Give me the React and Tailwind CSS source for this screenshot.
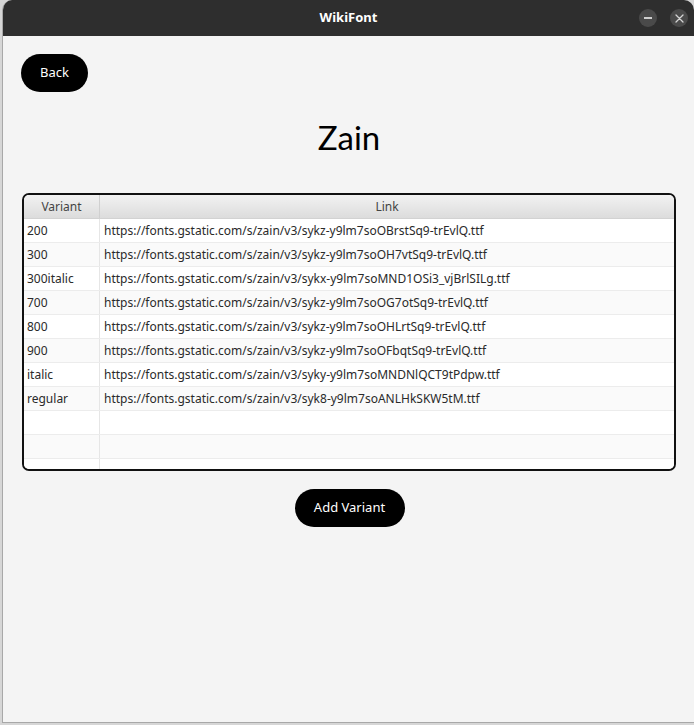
import React from "react";

const rows = [
  ["200", "https://fonts.gstatic.com/s/zain/v3/sykz-y9lm7soOBrstSq9-trEvlQ.ttf"],
  ["300", "https://fonts.gstatic.com/s/zain/v3/sykz-y9lm7soOH7vtSq9-trEvlQ.ttf"],
  ["300italic", "https://fonts.gstatic.com/s/zain/v3/sykx-y9lm7soMND1OSi3_vjBrlSILg.ttf"],
  ["700", "https://fonts.gstatic.com/s/zain/v3/sykz-y9lm7soOG7otSq9-trEvlQ.ttf"],
  ["800", "https://fonts.gstatic.com/s/zain/v3/sykz-y9lm7soOHLrtSq9-trEvlQ.ttf"],
  ["900", "https://fonts.gstatic.com/s/zain/v3/sykz-y9lm7soOFbqtSq9-trEvlQ.ttf"],
  ["italic", "https://fonts.gstatic.com/s/zain/v3/syky-y9lm7soMNDNlQCT9tPdpw.ttf"],
  ["regular", "https://fonts.gstatic.com/s/zain/v3/syk8-y9lm7soANLHkSKW5tM.ttf"],
  ["", ""],
  ["", ""],
  ["", ""],
];

export default function App() {
  return (
    <div
      className="w-[694px] h-[725px] bg-[#d6d6d6] overflow-hidden"
      style={{ fontFamily: '"Noto Sans", "DejaVu Sans", sans-serif' }}
    >
      <div className="ml-[2px] h-[723px] flex flex-col bg-[#f4f4f4] rounded-t-[10px] overflow-hidden border-l border-b border-[#a8a8a8]">
        <div className="h-[36px] shrink-0 bg-[#2e2e2e] flex items-center relative">
          <div className="flex-1 text-center text-white text-[13px] font-bold">WikiFont</div>
          <div className="absolute right-[6px] top-[9px] flex gap-[13px]">
            <div className="w-[18px] h-[18px] rounded-full bg-[#4a4a4a] flex items-center justify-center">
              <div className="w-[8px] h-[1.5px] bg-[#cfcfcf]" />
            </div>
            <div className="w-[18px] h-[18px] rounded-full bg-[#4a4a4a] flex items-center justify-center">
              <svg width="9" height="9" viewBox="0 0 9 9">
                <path d="M1 1L8 8M8 1L1 8" stroke="#d4d4d4" strokeWidth="1.3" strokeLinecap="round" />
              </svg>
            </div>
          </div>
        </div>

        <div className="flex-1 flex flex-col pl-[19px] pr-[18px]">
          <div className="pt-[18px] -ml-[1px]">
            <button className="w-[67px] h-[38px] rounded-full bg-black text-white text-[13px]">Back</button>
          </div>
          <div
            className="text-center text-[33px] leading-none text-black mt-[29px]"
            style={{ fontFamily: '"Lato", "Noto Sans", sans-serif' }}
          >
            Zain
          </div>
          <div className="mt-[39px] h-[278px] border-2 border-[#111] rounded-[7px] overflow-hidden bg-white">
            <div className="flex h-[24px] bg-gradient-to-b from-[#f2f2f2] to-[#dcdcdc] border-b border-[#d2d2d2] text-[12px] text-[#444]">
              <div className="w-[76px] flex items-center justify-center border-r border-[#d0d0d0]">Variant</div>
              <div className="flex-1 flex items-center justify-center">Link</div>
            </div>
            {rows.map((r, i) => (
              <div
                key={i}
                className={`flex h-[24px] border-b border-[#ececec] text-[12px] text-[#2a2a2a] ${i % 2 === 1 ? "bg-[#fafafa]" : "bg-white"}`}
              >
                <div className="w-[76px] flex items-center pl-[3px] border-r border-[#e6e6e6]">{r[0]}</div>
                <div className="flex-1 flex items-center pl-[4px]">{r[1]}</div>
              </div>
            ))}
          </div>
          <div className="flex justify-center mt-[18px] pl-[1px]">
            <button className="w-[110px] h-[38px] rounded-full bg-black text-white text-[13px]">Add Variant</button>
          </div>
        </div>
      </div>
    </div>
  );
}
